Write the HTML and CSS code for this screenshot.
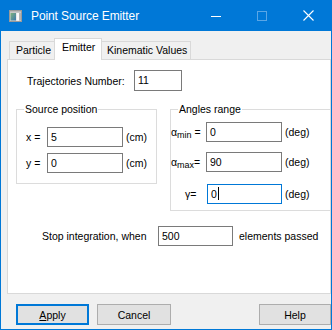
FILE: index.html
```html
<!DOCTYPE html>
<html lang="en">
<head>
    <meta charset="UTF-8">
    <title>Point Source Emitter</title>
    <link rel="stylesheet" href="styles.css">
</head>
<body>
    <div class="window">
        <header class="titlebar">
            <svg class="app-icon" width="13" height="12" viewBox="0 0 13 12">
                <defs>
                    <linearGradient id="pane" x1="0" y1="0" x2="1" y2="1">
                        <stop offset="0" stop-color="#7fb27a"/>
                        <stop offset="1" stop-color="#3d78b0"/>
                    </linearGradient>
                </defs>
                <rect x="0.5" y="0.5" width="12" height="11" fill="#d8d8d8" stroke="#9a9a9a"/>
                <rect x="1" y="1" width="11" height="1.5" fill="#b8b8b8"/>
                <rect x="1.5" y="3" width="5.5" height="7.5" fill="url(#pane)"/>
                <rect x="7.5" y="3" width="2.5" height="7.5" fill="#fafafa"/>
                <rect x="10.3" y="3" width="1.5" height="7.5" fill="#a8a8a8"/>
            </svg>
            <span class="title">Point Source Emitter</span>
            <div class="caption-buttons">
                <span class="cap-btn">
                    <svg width="10" height="10" viewBox="0 0 10 10"><line x1="0" y1="5.5" x2="10" y2="5.5" stroke="#fff"/></svg>
                </span>
                <span class="cap-btn">
                    <svg width="10" height="10" viewBox="0 0 10 10"><rect x="0.5" y="0.5" width="9" height="9" fill="none" stroke="#5aa6e6"/></svg>
                </span>
                <span class="cap-btn">
                    <svg width="11" height="11" viewBox="0 0 11 11"><path d="M0.5 0.5 L10.5 10.5 M10.5 0.5 L0.5 10.5" stroke="#fff" stroke-width="1.1"/></svg>
                </span>
            </div>
        </header>

        <div class="client">
            <div class="tabs">
                <div class="tab tab-particle">Particle</div>
                <div class="tab tab-emitter active">Emitter</div>
                <div class="tab tab-kinematic">Kinematic Values</div>
            </div>

            <div class="panel">
                <div class="traj-row">
                    <span class="traj-label">Trajectories Number:</span>
                    <div class="textbox tb-traj">11</div>
                </div>

                <div class="groups">
                    <div class="group group-source">
                        <div class="group-title">Source position</div>
                        <div class="field field-x">
                            <span class="src-label">x =</span>
                            <div class="textbox tb-wide">5</div>
                            <span class="unit">(cm)</span>
                        </div>
                        <div class="field field-y">
                            <span class="src-label">y =</span>
                            <div class="textbox tb-wide">0</div>
                            <span class="unit">(cm)</span>
                        </div>
                    </div>

                    <div class="group group-angles">
                        <div class="group-title">Angles range</div>
                        <div class="field field-amin">
                            <span class="ang-label">α<sub>min</sub> =</span>
                            <div class="textbox tb-wide">0</div>
                            <span class="unit">(deg)</span>
                        </div>
                        <div class="field field-amax">
                            <span class="ang-label">α<sub>max</sub>=</span>
                            <div class="textbox tb-wide">90</div>
                            <span class="unit">(deg)</span>
                        </div>
                        <div class="field field-gamma">
                            <span class="ang-label gamma">γ=</span>
                            <div class="textbox tb-gamma focused">0<span class="caret"></span></div>
                            <span class="unit">(deg)</span>
                        </div>
                    </div>
                </div>

                <div class="stop-row">
                    <span class="stop-label">Stop integration, when</span>
                    <div class="textbox tb-stop">500</div>
                    <span class="stop-unit">elements passed</span>
                </div>
            </div>

            <div class="buttons">
                <button class="btn btn-apply default"><u>A</u>pply</button>
                <button class="btn btn-cancel">Cancel</button>
                <button class="btn btn-help">Help</button>
            </div>
        </div>
    </div>
</body>
</html>
```

FILE: styles.css
```css
*{margin:0; padding:0; box-sizing:border-box;}
body{background:#f0f0f0;}

.window{
    width:332px; height:330px;
    border:1px solid #0078d7; border-top:0;
    background:#f0f0f0;
    display:flex; flex-direction:column;
    overflow:hidden;
    font-family:"Liberation Sans", Arial, sans-serif;
    font-size:10.5px; color:#000;
}

/* title bar */
.titlebar{
    height:31px; flex:none;
    background:#0078d7;
    display:flex; align-items:center;
}
.app-icon{margin-left:8px; margin-top:1px; flex:none;}
.title{
    margin-left:9px;
    color:#fff; font-size:12px;
    letter-spacing:-0.1px;
}
.caption-buttons{margin-left:auto; display:flex; height:100%;}
.cap-btn{
    width:46px; height:100%;
    display:flex; align-items:center; justify-content:center;
}

/* client area */
.client{flex:1; display:flex; flex-direction:column; overflow:hidden;}

.tabs{
    display:flex; align-items:flex-end;
    height:21px; margin:7px 0 0 8px;
    position:relative; z-index:1;
}
.tab{
    height:18px;
    border:1px solid #d9d9d9; border-bottom:0;
    background:#f0f0f0;
    line-height:14px; padding-top:1px;
    white-space:nowrap;
}
.tab-particle{width:46px; padding-left:6px;}
.tab-emitter{width:48px; margin-left:-1px; padding-left:7px;}
.tab-kinematic{width:90px; margin-left:-1px; padding-left:5px;}
.tab.active{
    height:22px; margin-bottom:-1px;
    background:#fff; position:relative; z-index:2;
    line-height:16px; padding-top:0;
}

.panel{
    flex:none;
    margin-left:6px; width:324px; height:235px;
    border:1px solid #d9d9d9; background:#fff;
    overflow:hidden;
}

.textbox{
    height:20px; flex:none;
    border:1px solid #7a7a7a; background:#fff;
    padding-left:3px; line-height:18px;
    white-space:nowrap;
}
.textbox.focused{border-color:#0078d7;}
.caret{
    display:inline-block; width:1px; height:13px;
    background:#000; vertical-align:-2px; margin-left:1px;
}

.traj-row{display:flex; align-items:center; margin:10px 0 0 19px;}
.traj-label{width:107px;}
.tb-traj{width:48px; height:21px; line-height:19px;}

.groups{display:flex; align-items:flex-start; margin-top:18px;}
.group{
    border:1px solid #dcdcdc;
    display:flex; flex-direction:column; flex:none;
}
.group-source{margin-left:8px; width:141px; height:75px;}
.group-angles{margin-left:13px; width:170px; height:102px;}
.group-title{
    align-self:flex-start;
    margin:-7px 0 0 7px; padding:0 1px;
    background:#fff; line-height:13px;
}

.field{display:flex; align-items:center;}
.unit{margin-left:3px;}
.tb-wide{width:76px;}

.group-source .field{padding-left:9px;}
.field-x{margin-top:11px;}
.field-y{margin-top:6px;}
.src-label{width:21px;}

.ang-label{width:35px; white-space:nowrap;}
.ang-label sub{font-size:9px; vertical-align:-2px; line-height:0;}
.ang-label.gamma{width:36px; padding-left:14px;}
.field-amin{margin-top:6px;}
.field-amax{margin-top:10px;}
.field-gamma{margin-top:12px;}
.tb-gamma{width:75px;}

.stop-row{display:flex; align-items:center; margin:15px 0 0 34px;}
.stop-label{width:116px; white-space:nowrap;}
.tb-stop{width:75px;}
.stop-unit{margin-left:6px; white-space:nowrap;}

/* dialog buttons */
.buttons{display:flex; margin:10px 0 0 15px;}
.btn{
    height:21px; flex:none;
    border:1px solid #adadad; background:#e1e1e1;
    font:inherit; color:#000;
}
.btn.default{border:2px solid #0078d7;}
.btn-apply{width:73px;}
.btn-cancel{width:74px; margin-left:8px;}
.btn-help{width:72px; margin-left:88px;}
```
